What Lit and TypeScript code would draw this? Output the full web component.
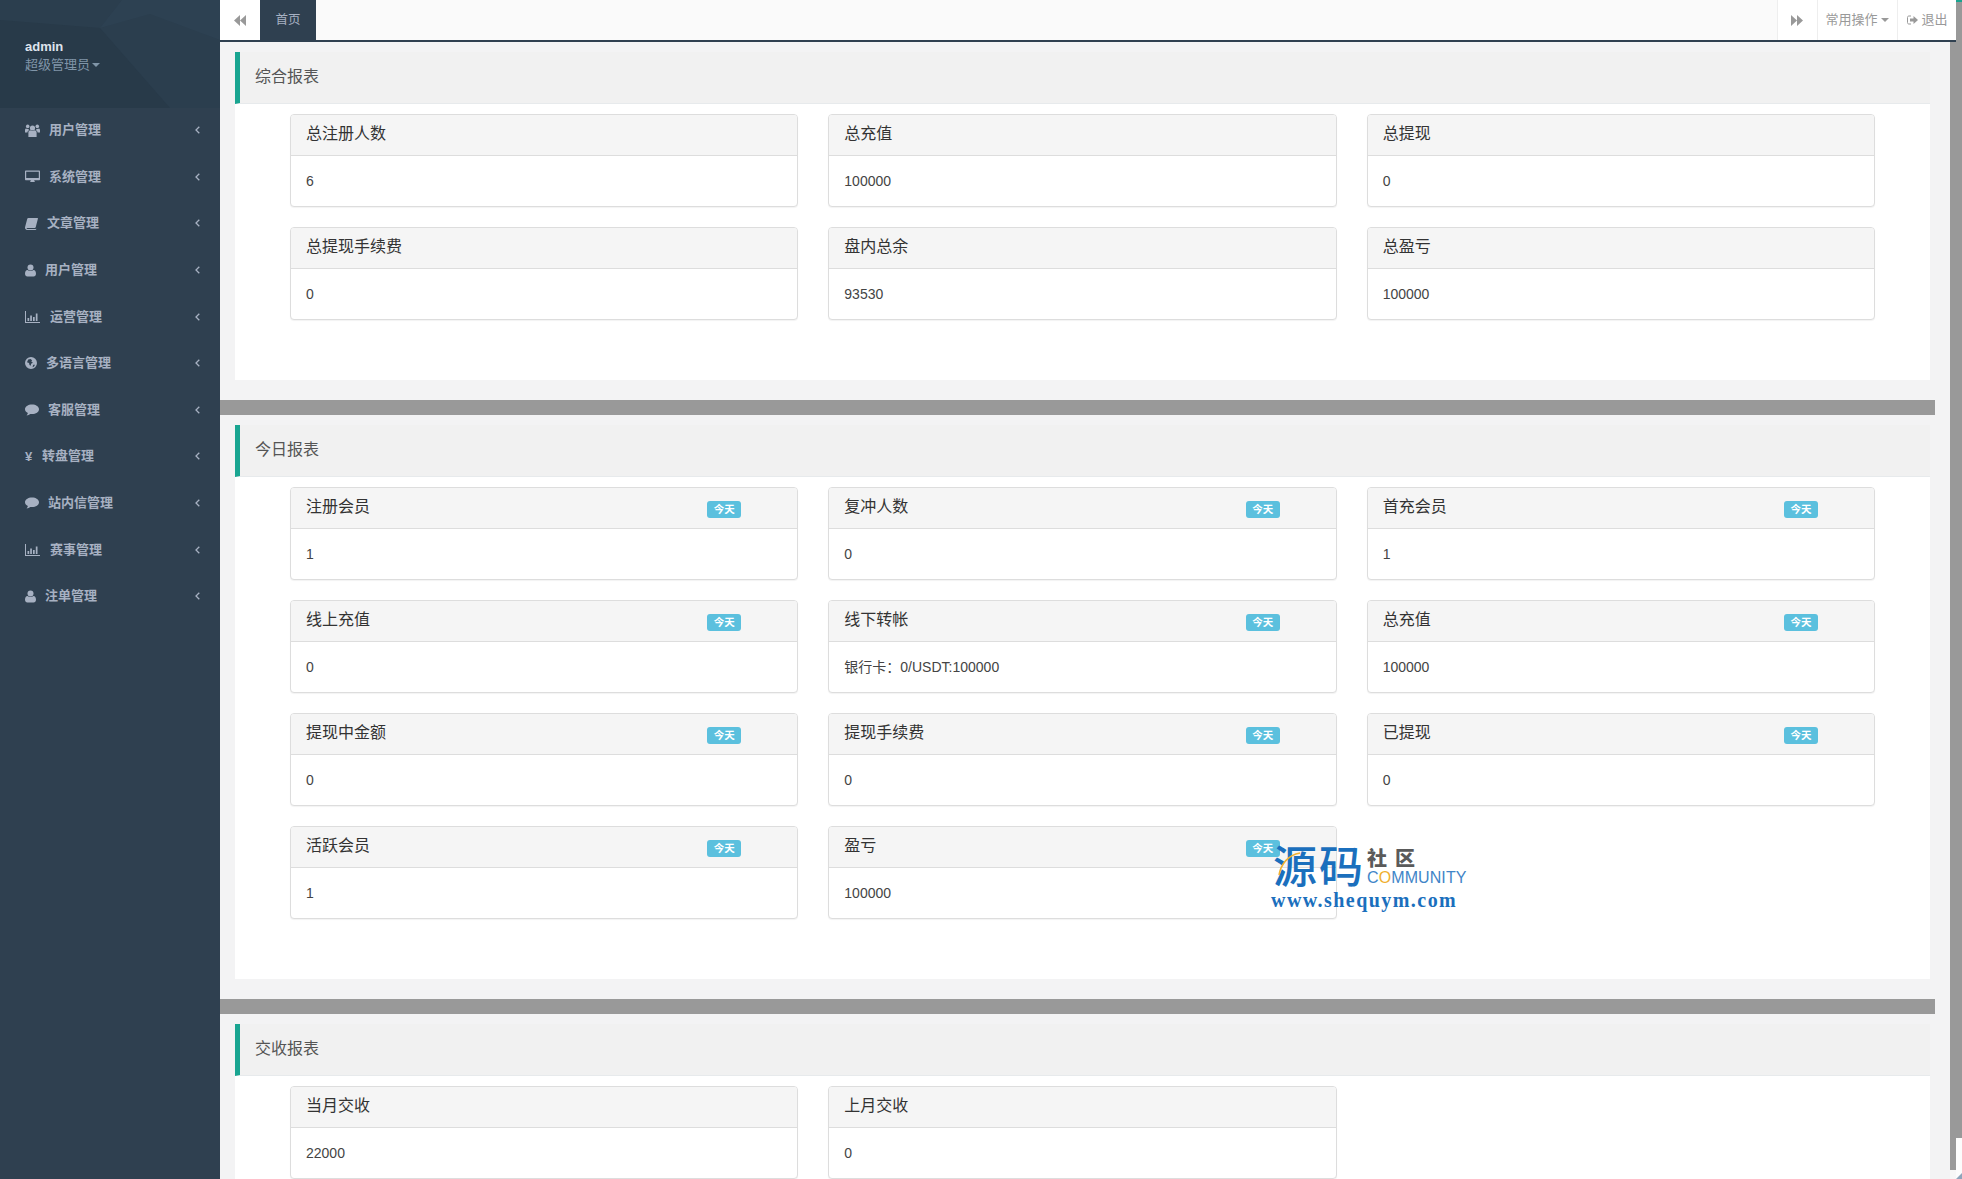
import { LitElement, html, css, svg } from "lit";
import { customElement } from "lit/decorators.js";

const ICONS: Record<string, unknown> = {
  users: svg`<svg class="ic" viewBox="0 0 15 13" width="15" height="13"><circle cx="7.5" cy="4" r="2.6"/><circle cx="2.7" cy="2.4" r="1.8"/><circle cx="12.3" cy="2.4" r="1.8"/><path d="M3.4 13V8.6C3.4 7 4.4 6.3 5.2 6.2c.6.5 1.4.8 2.3.8s1.700-.3 2.300-.8c.8.1 1.800.8 1.800 2.400V13z"/><path d="M0 8.500V6.200c0-1 .6-1.700 1.200-1.700.4.400 1 .6 1.500.6.300 0 .7-.1 1-.2-.1.500.1 1 .3 1.300-1 .5-1.500 1.300-1.600 2.300zM15 8.500V6.200c0-1-.6-1.700-1.200-1.700-.4.400-1 .6-1.500.6-.3 0-.7-.1-1-.2.1.500-.1 1-.3 1.300 1 .5 1.500 1.300 1.600 2.300z"/></svg>`,
  desktop: svg`<svg class="ic" viewBox="0 0 15 13" width="15" height="13"><path fill-rule="evenodd" d="M1 .5h13c.6 0 1 .4 1 1v7.700c0 .6-.4 1-1 1H9.200c0 .7.300 1 .6 1.400v.4H5.200v-.4c.3-.4.600-.7.600-1.400H1c-.6 0-1-.4-1-1V1.500C0 .9.400.5 1 .5zm.2 1.200v6.200h12.600V1.700z"/></svg>`,
  book: svg`<svg class="ic" viewBox="0 0 13 13" width="13" height="13"><path d="M3.300 1H12.400c.5 0 .6.400.5.800L10.700 10.300c-.1.500-.5.700-1 .7H2.500c-.5 0-.9.300-1 .6 0 .3.200.5.600.5h8.400l.9-.4-.2.700c-.1.300-.4.500-.8.500H1.700C.7 12.400 0 11.700 0 10.800c0-.3 0-.5.100-.8L2.200 2c.2-.6.500-1 1.100-1z"/></svg>`,
  user: svg`<svg class="ic" viewBox="0 0 11 13" width="11" height="13"><circle cx="5.500" cy="3.400" r="3"/><path d="M2.500 6c.8.700 1.900 1 3 1s2.200-.3 3-1c1.500.2 2.500 1.500 2.500 3.800 0 1.600-1 2.700-2.400 2.700H2.400C1 12.500 0 11.400 0 9.800 0 7.500 1 6.200 2.500 6z"/></svg>`,
  chart: svg`<svg class="ic" viewBox="0 0 15 12" width="15" height="12"><path d="M0 0h1v11h14v1H0z"/><path d="M2.500 7h1.700v3H2.500zM5.200 4.500h1.700V10H5.200zM8 6h1.700v4H8zM10.800 2.500h1.700V10h-1.700z"/></svg>`,
  globe: svg`<svg class="ic" viewBox="0 0 12 12" width="12" height="12"><path fill-rule="evenodd" d="M6 0a6 6 0 1 1 0 12A6 6 0 0 1 6 0zM3.200 2.500 2 5.200l2 .8.500 2 1.200.8.400-2 1.800-1-1.600-1.300.8-1.200L5.500 2zM8.300 7.800 7.500 10.200l1.500-.7 1-1.800z"/></svg>`,
  comment: svg`<svg class="ic" viewBox="0 0 14 12" width="14" height="12"><path d="M7 .5c3.900 0 7 2.100 7 4.800s-3.100 4.800-7 4.800c-.6 0-1.200 0-1.700-.1-1 .8-2.200 1.300-3.700 1.500.6-.7 1.100-1.500 1.300-2.400C1.200 8.200 0 6.900 0 5.300 0 2.600 3.100.5 7 .5z"/></svg>`,
};

const DL = svg`<svg class="dbl" viewBox="0 0 12 11" width="12" height="11"><path d="M6 0v11L0 5.500zM12 0v11L6 5.500z"/></svg>`;
const DR = svg`<svg class="dbl" viewBox="0 0 12 11" width="12" height="11"><path d="M0 0v11l6-5.500zM6 0v11l6-5.500z"/></svg>`;
const OUT = svg`<svg class="dbl" viewBox="0 0 11 10" width="11" height="10"><path d="M4 1H2C1 1 .5 1.500.5 2.500v5C.5 8.500 1 9 2 9h2" fill="none" stroke="currentColor" stroke-width="1"/><path d="M3 3.500h3.500V1L11 5 6.500 9V6.500H3z"/></svg>`;

const MENU: [string, string, number][] = [
  ["users", "用户管理", 24],
  ["desktop", "系统管理", 24],
  ["book", "文章管理", 22],
  ["user", "用户管理", 20],
  ["chart", "运营管理", 25],
  ["globe", "多语言管理", 21],
  ["comment", "客服管理", 23],
  ["yen", "转盘管理", 17],
  ["comment", "站内信管理", 23],
  ["chart", "赛事管理", 25],
  ["user", "注单管理", 20],
];

type Item = [string, string];
interface Sec {
  title: string;
  badge: boolean;
  items: Item[];
}

const SECTIONS: Sec[] = [
  {
    title: "综合报表",
    badge: false,
    items: [
      ["总注册人数", "6"],
      ["总充值", "100000"],
      ["总提现", "0"],
      ["总提现手续费", "0"],
      ["盘内总余", "93530"],
      ["总盈亏", "100000"],
    ],
  },
  {
    title: "今日报表",
    badge: true,
    items: [
      ["注册会员", "1"],
      ["复冲人数", "0"],
      ["首充会员", "1"],
      ["线上充值", "0"],
      ["线下转帐", "银行卡：0/USDT:100000"],
      ["总充值", "100000"],
      ["提现中金额", "0"],
      ["提现手续费", "0"],
      ["已提现", "0"],
      ["活跃会员", "1"],
      ["盈亏", "100000"],
    ],
  },
  {
    title: "交收报表",
    badge: false,
    items: [
      ["当月交收", "22000"],
      ["上月交收", "0"],
    ],
  },
];

@customElement("app-root")
export class AppRoot extends LitElement {
  static styles = css`
    :host {
      display: block;
      height: 1179px;
      overflow: hidden;
      position: relative;
      font-family: "Liberation Sans", "Noto Sans CJK SC", sans-serif;
      background: #f3f3f4;
    }
    .shell {
      display: flex;
      height: 1179px;
    }
    .side {
      flex: none;
      width: 220px;
      background: #2f4050;
      display: flex;
      flex-direction: column;
    }
    .profile {
      height: 108px;
      box-sizing: border-box;
      padding: 38px 25px 0;
      background: #2b3e4e;
      position: relative;
    }
    .profile::before,
    .profile::after {
      content: "";
      position: absolute;
      inset: 0;
    }
    .profile::before {
      background: #283a49;
      clip-path: polygon(0 20px, 100px 28px, 170px 108px, 0 108px);
    }
    .profile::after {
      background: #2d4152;
      clip-path: polygon(100px 28px, 122px 0, 220px 0, 220px 40px, 150px 14px);
    }
    .name,
    .role {
      position: relative;
      z-index: 1;
    }
    .name {
      color: #dfe4ed;
      font-weight: 700;
      font-size: 13px;
      line-height: 18px;
    }
    .role {
      color: #8095a8;
      font-size: 13px;
      line-height: 19px;
      display: flex;
      align-items: center;
      margin-top: -1px;
    }
    .caret {
      width: 0;
      height: 0;
      border-left: 4px solid transparent;
      border-right: 4px solid transparent;
      border-top: 4px solid currentColor;
      margin-left: 3px;
    }
    .role .caret {
      margin-left: 2px;
    }
    .item {
      height: 46.6px;
      box-sizing: border-box;
      padding: 0 20px 2px 25px;
      display: flex;
      align-items: center;
      color: #a7b1c2;
      font-size: 13px;
      font-weight: 700;
    }
    .iconbox {
      flex: none;
      display: flex;
      align-items: center;
    }
    .ic {
      fill: #a7b1c2;
    }
    .yen {
      font-size: 13px;
      font-weight: 700;
    }
    .label {
      flex: 1;
      line-height: 16px;
    }
    .chev {
      fill: none;
      stroke: #a7b1c2;
      stroke-width: 1.300;
    }
    .main {
      flex: none;
      width: 1736px;
      display: flex;
      flex-direction: column;
      height: 1179px;
    }
    .top {
      flex: none;
      height: 40px;
      border-bottom: 2px solid #2f4050;
      background: #fafafa;
      display: flex;
      font-size: 13px;
      color: #999;
    }
    .tb {
      background: #fff;
      display: flex;
      align-items: center;
      justify-content: center;
      box-sizing: border-box;
      fill: #999;
    }
    .up {
      line-height: 16px;
      padding-bottom: 1px;
    }
    .tb.back {
      width: 40px;
    }
    .tab {
      width: 56px;
      background: #2f4050;
      color: #a7b1c2;
      font-size: 12.500px;
      display: flex;
      align-items: center;
      justify-content: center;
    }
    .spacer {
      flex: 1;
    }
    .tb.fwd {
      width: 40px;
      border-left: 1px solid #eee;
    }
    .tb.ops {
      width: 80px;
      border-left: 1px solid #eee;
    }
    .tb.out {
      width: 59.500px;
      border-left: 1px solid #eee;
      gap: 4px;
      justify-content: flex-start;
      padding-left: 9px;
    }
    .lower {
      flex: 1;
      display: flex;
      min-height: 0;
    }
    .scroller {
      flex: 1;
      overflow: hidden;
      padding-top: 10px;
    }
    .section {
      margin: 0 20px 0 15px;
      background: #fff;
      padding-bottom: 60px;
    }
    .head {
      height: 51px;
      box-sizing: content-box;
      border-left: 5px solid #19a591;
      border-bottom: 1px solid #e7eaec;
      background: #f1f1f1;
      display: flex;
      align-items: center;
      padding-left: 15px;
      font-size: 16px;
      color: #555;
    }
    .head span {
      line-height: 20px;
      padding-bottom: 2px;
    }
    .grid {
      display: grid;
      grid-template-columns: repeat(3, 508.330px);
      gap: 20px 30px;
      padding: 10px 0 0 55px;
    }
    .panel {
      border: 1px solid #ddd;
      border-radius: 4px;
      background: #fff;
      box-shadow: 0 1px 1px rgba(0, 0, 0, 0.05);
    }
    .phead {
      height: 40px;
      border-bottom: 1px solid #ddd;
      background: #f5f5f5;
      border-radius: 3px 3px 0 0;
      display: flex;
      justify-content: space-between;
      padding: 0 56px 0 15px;
      font-size: 16px;
      line-height: 38px;
      color: #333;
    }
    .badge {
      align-self: flex-start;
      margin-top: 13px;
      width: 34px;
      height: 17px;
      border-radius: 3px;
      background: #5bc0de;
      color: #fff;
      font-size: 10.500px;
      font-weight: 700;
      line-height: 17px;
      text-align: center;
    }
    .pbody {
      height: 50px;
      padding: 0 15px;
      line-height: 50px;
      font-size: 14px;
      color: #444;
    }
    .bar {
      height: 15px;
      background: #999;
      margin: 20px 15px 10px 0;
    }
    .strip {
      flex: none;
      width: 6px;
      display: flex;
      flex-direction: column;
    }
    .strip .g {
      height: 1128px;
      background: #999;
    }
    .strip .w {
      flex: 1;
      background: #f7f7f7;
    }
    .rail {
      flex: none;
      width: 6px;
      display: flex;
      flex-direction: column;
      background: #999;
    }
    .rail .t {
      height: 2px;
      background: #19a591;
    }
    .rail .g {
      height: 1136px;
    }
    .rail .w {
      flex: 1;
      background: #fcfcfc;
      display: flex;
      align-items: flex-end;
    }
    .rail svg {
      fill: #8fa5bb;
    }
    .wm {
      position: absolute;
      left: 1270px;
      top: 842px;
      width: 200px;
      height: 72px;
      pointer-events: none;
    }
    .wm .big {
      position: absolute;
      left: 3px;
      top: -6px;
      font-family: "Noto Sans CJK SC", sans-serif;
      font-size: 44px;
      font-weight: 500;
      line-height: 56px;
      color: #1b6fbd;
      letter-spacing: 2px;
      white-space: nowrap;
    }
    .wm .arc {
      position: absolute;
      left: 8px;
      top: 8px;
      fill: none;
      stroke: #f0b030;
      stroke-width: 1.500;
    }
    .wm .she {
      position: absolute;
      left: 97px;
      top: 4px;
      font-family: "Noto Sans CJK SC", sans-serif;
      font-size: 20px;
      font-weight: 900;
      line-height: 24px;
      letter-spacing: 8px;
      color: #5a5a5a;
      white-space: nowrap;
    }
    .wm .com {
      position: absolute;
      left: 97px;
      top: 28px;
      font-size: 16px;
      line-height: 16px;
      color: #3f85c8;
      letter-spacing: 0.100px;
      white-space: nowrap;
    }
    .wm .com b {
      font-weight: 400;
      color: #f0b030;
    }
    .wm .url {
      position: absolute;
      left: 1px;
      top: 48px;
      font-family: "Liberation Serif", serif;
      font-weight: 700;
      font-size: 20px;
      line-height: 20px;
      letter-spacing: 1.450px;
      color: #1b6fbd;
      white-space: nowrap;
    }
  `;

  private menuItem(m: [string, string, number]) {
    return html`<div class="item">
      <span class="iconbox" style="width:${m[2]}px">
        ${m[0] === "yen" ? html`<span class="yen">¥</span>` : ICONS[m[0]]}
      </span>
      <span class="label">${m[1]}</span>
      <svg class="chev" viewBox="0 0 5 8" width="5" height="8"><path d="M4.300.7 1 4l3.300 3.300" /></svg>
    </div>`;
  }

  private section(s: Sec) {
    return html`<div class="section">
      <div class="head"><span>${s.title}</span></div>
      <div class="grid">
        ${s.items.map(
          (i) => html`<div class="panel">
            <div class="phead">
              <span>${i[0]}</span>${s.badge ? html`<span class="badge">今天</span>` : ""}
            </div>
            <div class="pbody">${i[1]}</div>
          </div>`,
        )}
      </div>
    </div>`;
  }

  render() {
    return html`<div class="shell">
        <aside class="side">
          <div class="profile">
            <div class="name">admin</div>
            <div class="role">超级管理员<span class="caret"></span></div>
          </div>
          ${MENU.map((m) => this.menuItem(m))}
        </aside>
        <div class="main">
          <div class="top">
            <div class="tb back">${DL}</div>
            <div class="tab"><span class="up">首页</span></div>
            <div class="spacer"></div>
            <div class="tb fwd">${DR}</div>
            <div class="tb ops"><span class="up">常用操作</span><span class="caret"></span></div>
            <div class="tb out">${OUT}<span class="up">退出</span></div>
          </div>
          <div class="lower">
            <div class="scroller">
              ${this.section(SECTIONS[0])}
              <div class="bar"></div>
              ${this.section(SECTIONS[1])}
              <div class="bar"></div>
              ${this.section(SECTIONS[2])}
            </div>
            <div class="strip"><div class="g"></div><div class="w"></div></div>
          </div>
        </div>
        <div class="rail">
          <div class="t"></div>
          <div class="g"></div>
          <div class="w"><svg viewBox="0 0 6 6" width="6" height="6"><path d="M6 0v6H0z" /></svg></div>
        </div>
      </div>
      <div class="wm">
        <div class="big">源码</div>
        <svg class="arc" viewBox="0 0 24 24" width="24" height="28"><path d="M1 23C3 12 10 3 22 1" /></svg>
        <div class="she">社区</div>
        <div class="com">C<b>O</b>MMUNITY</div>
        <div class="url">www.shequym.com</div>
      </div>`;
  }
}
